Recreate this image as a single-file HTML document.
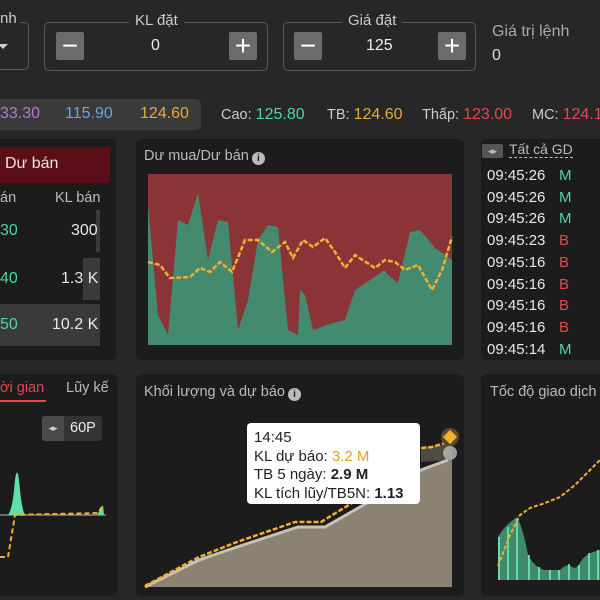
<!DOCTYPE html>
<html><head><meta charset="utf-8"><style>
*{margin:0;padding:0;box-sizing:border-box}
body{width:600px;height:600px;background:#272727;font-family:"Liberation Sans","Noto Sans CJK SC",sans-serif;color:#ddd;position:relative;overflow:hidden}
.a{position:absolute;white-space:nowrap}
.box{position:absolute;border:1.5px solid #5a5a5a;border-radius:5px}
.btn{position:absolute;width:28px;height:28px;background:#6b6b6b;border-radius:2px;color:#fff;font-size:28px;line-height:27px;text-align:center}
.lbl{position:absolute;background:#272727;padding:0 6px;font-size:15px;color:#ccc;top:-11px}
.p{position:absolute;background:#1c1c1c;border-radius:5px}
.t{font-size:14.5px;color:#bbb}
.tr{font-size:15px;color:#e8e8e8}
.i{display:inline-block;width:13px;height:13px;border-radius:50%;background:#bbb;color:#1c1c1c;font-size:10px;text-align:center;line-height:13px;font-weight:bold;vertical-align:-1px;margin-left:3px}
</style></head><body>
<!-- top inputs -->
<div class="box" style="left:-10px;top:22px;width:39px;height:48px"></div>
<div class="a" style="left:0;top:10px;font-size:15px;color:#ccc;background:#272727;padding-right:3px">nh</div>
<div class="a" style="left:-2px;top:44px;width:0;height:0;border-left:5px solid transparent;border-right:5px solid transparent;border-top:5px solid #ccc"></div>
<div class="box" style="left:44px;top:22px;width:224px;height:49px"><div class="lbl" style="left:84px">KL đặt</div></div>
<div class="btn" style="left:56px;top:32px">−</div>
<div class="a" style="left:151px;top:37px;font-size:16px;color:#eee">0</div>
<div class="btn" style="left:229px;top:32px">+</div>
<div class="box" style="left:283px;top:22px;width:193px;height:49px"><div class="lbl" style="left:58px">Giá đặt</div></div>
<div class="btn" style="left:294px;top:32px">−</div>
<div class="a" style="left:366px;top:37px;font-size:16px;color:#eee">125</div>
<div class="btn" style="left:438px;top:32px">+</div>
<div class="a" style="left:492px;top:23px;font-size:16px;color:#aaa">Giá trị lệnh</div>
<div class="a" style="left:492px;top:47px;font-size:16px;color:#ddd">0</div>
<!-- price row -->
<div class="a" style="left:-6px;top:99px;width:207px;height:31px;background:#3a3a3a;border-radius:5px"></div>
<div class="a" style="left:0;top:105px;font-size:16px;color:#b775d8">33.30</div>
<div class="a" style="left:65px;top:105px;font-size:16px;color:#6fa3dc">115.90</div>
<div class="a" style="left:140px;top:105px;font-size:16px;color:#e6a93e">124.60</div>
<div class="a" style="left:221px;top:106px;font-size:14.5px;color:#ccc">Cao: <span style="color:#4ed6a0;font-size:16px">125.80</span></div>
<div class="a" style="left:327px;top:106px;font-size:14.5px;color:#ccc">TB: <span style="color:#e6a93e;font-size:16px">124.60</span></div>
<div class="a" style="left:422px;top:106px;font-size:14.5px;color:#ccc">Thấp: <span style="color:#e5474f;font-size:16px">123.00</span></div>
<div class="a" style="left:532px;top:106px;font-size:14.5px;color:#ccc">MC: <span style="color:#e5474f;font-size:16px">124.1</span></div>
<!-- row 2 -->
<div class="p" style="left:-6px;top:139px;width:122px;height:221px"></div>
<div class="a" style="left:-6px;top:147px;width:116px;height:36px;background:#5a0f18"></div>
<div class="a" style="left:5px;top:155px;font-size:16px;color:#f0e0e0">Dư bán</div>
<div class="a t" style="left:0;top:190px">án</div>
<div class="a t" style="left:55px;top:190px">KL bán</div>
<div class="a" style="left:96px;top:210px;width:4px;height:42px;background:#3a3a3a"></div>
<div class="a" style="left:83px;top:258px;width:17px;height:42px;background:#3a3a3a"></div>
<div class="a" style="left:-6px;top:304px;width:106px;height:42px;background:#3a3a3a"></div>
<div class="a" style="left:0;top:222px;font-size:16px;color:#4ed6a0">30</div>
<div class="a tr" style="left:71px;top:222px;font-size:16px">300</div>
<div class="a" style="left:0;top:270px;font-size:16px;color:#4ed6a0">40</div>
<div class="a tr" style="left:61px;top:270px;font-size:16px">1.3 K</div>
<div class="a" style="left:0;top:316px;font-size:16px;color:#4ed6a0">50</div>
<div class="a tr" style="left:52px;top:316px;font-size:16px">10.2 K</div>

<div class="p" style="left:136px;top:139px;width:328px;height:221px"></div>
<div class="a" style="left:144px;top:148px;font-size:14.5px;color:#bbb">Dư mua/Dư bán<span class="i">i</span></div>
<svg class="a" style="left:0;top:0" width="600" height="600">
<rect x="148" y="174" width="304" height="171" fill="#8a3438"/>
<polygon fill="#448a6e" points="148,205 158,315 168,335 178,220 188,225 198,193 208,260 218,220 228,222 238,330 248,300 258,240 268,225 278,227 288,330 298,335 300,290 305,295 313,330 326,325 345,320 355,290 385,270 388,275 398,283 410,232 420,230 435,248 452,260 452,345 148,345"/>
<polyline fill="none" stroke="#f0b030" stroke-width="2.5" stroke-dasharray="5,2" points="148,262 160,265 170,278 190,277 200,268 210,272 220,262 232,272 245,240 258,240 272,252 285,242 293,258 303,240 313,247 325,238 335,252 345,268 355,255 375,268 385,260 395,262 405,270 418,265 432,290 442,270 452,237"/>
</svg>
<div class="p" style="left:481px;top:139px;width:130px;height:221px"></div>
<div class="a" style="left:482px;top:144px;width:21px;height:14px;background:#555;border-radius:2px;font-size:9px;color:#bbb;text-align:center;line-height:14px">◂▸</div>
<div class="a" style="left:509px;top:141px;font-size:14px;color:#bbb;border-bottom:1px dashed #bbb;line-height:16px">Tất cả GD</div>
<div class="a" style="left:487px;top:165px;font-size:15px;line-height:21.7px;color:#e8e8e8">09:45:26<br>09:45:26<br>09:45:26<br>09:45:23<br>09:45:16<br>09:45:16<br>09:45:16<br>09:45:16<br>09:45:14</div>
<div class="a" style="left:559px;top:165px;font-size:15px;line-height:21.7px"><span style="color:#4ed6a0">M</span><br><span style="color:#4ed6a0">M</span><br><span style="color:#4ed6a0">M</span><br><span style="color:#e5474f">B</span><br><span style="color:#e5474f">B</span><br><span style="color:#e5474f">B</span><br><span style="color:#e5474f">B</span><br><span style="color:#e5474f">B</span><br><span style="color:#4ed6a0">M</span></div>
<!-- row 3 -->
<div class="p" style="left:-6px;top:374px;width:123px;height:222px"></div>
<div class="a" style="left:0;top:380px;font-size:14.5px;color:#e5474f">ời gian</div>
<div class="a" style="left:0;top:400px;width:46px;height:2px;background:#e5474f"></div>
<div class="a" style="left:66px;top:380px;font-size:14.5px;color:#bbb">Lũy kế</div>
<div class="a" style="left:42px;top:416px;width:60px;height:25px;background:#333;border-radius:3px"></div>
<div class="a" style="left:42px;top:416px;width:22px;height:25px;background:#4a4a4a;border-radius:3px 0 0 3px;font-size:9px;color:#ccc;text-align:center;line-height:25px">◂▸</div>
<div class="a" style="left:70px;top:420px;font-size:14.5px;color:#eee">60P</div>
<svg class="a" style="left:0;top:0" width="600" height="600">
<line x1="0" y1="515" x2="106" y2="515" stroke="#bbb" stroke-width="1"/>
<path d="M8 515 Q12 510 14 490 Q17 455 20 490 Q22 510 25 515Z" fill="#5fe0a8"/>
<path d="M97 515 L103 505 L104 515Z" fill="#5fe0a8"/>
<polyline fill="none" stroke="#f0b030" stroke-width="2" stroke-dasharray="5,3" points="0,557 8,557 15,515 98,513 103,505"/>
</svg>
<div class="p" style="left:136px;top:374px;width:328px;height:222px"></div>
<div class="a" style="left:144px;top:384px;font-size:14.5px;color:#bbb">Khối lượng và dự báo<span class="i">i</span></div>
<svg class="a" style="left:0;top:0" width="600" height="600">
<polygon fill="#8c8272" points="145,587 199,560 237,547 298,527 325,527 367,503 421,470 448,460 452,460 452,587"/>
<polygon fill="#4f4a43" points="421,447 452,444 452,460 421,462"/>
<polyline fill="none" stroke="#c9c1b4" stroke-width="3" points="145,587 199,560 237,547 298,527 325,527 367,503 421,470 448,460"/>
<polyline fill="none" stroke="#f0b030" stroke-width="2.5" stroke-dasharray="5,2" points="145,586 199,557 237,542 295,522 321,522 352,503 383,472 421,448 432,447 448,442"/>
<circle cx="450" cy="453" r="7" fill="#bbb" opacity=".8"/>
<circle cx="450" cy="437" r="9" fill="#5a4a2a"/>
<rect x="445" y="432" width="10" height="10" fill="#f0b030" transform="rotate(45 450 437)"/>
</svg>
<div class="a" style="left:247px;top:423px;width:173px;height:81px;background:#fff;border-radius:4px"></div>
<div class="a" style="left:254px;top:429px;font-size:15px;line-height:18.5px;color:#222">14:45<br>KL dự báo: <span style="color:#e6a020">3.2 M</span><br>TB 5 ngày: <b>2.9 M</b><br>KL tích lũy/TB5N: <b>1.13</b></div>
<div class="p" style="left:481px;top:374px;width:130px;height:222px"></div>
<div class="a" style="left:490px;top:384px;font-size:14.5px;color:#bbb">Tốc độ giao dịch</div>
<svg class="a" style="left:0;top:0" width="600" height="600">
<path d="M498 580 L498 537 Q505 525 517 517 Q523 528 528 555 Q535 568 545 570 L560 570 Q568 562 572 567 Q576 570 580 563 Q585 553 600 550 L600 580Z" fill="#3f8a6c"/>
<g stroke="#6ff0b8" stroke-width="1.6">
<line x1="499" y1="537" x2="499" y2="580"/><line x1="508" y1="527" x2="508" y2="580"/><line x1="517" y1="519" x2="517" y2="580"/><line x1="529" y1="555" x2="529" y2="580"/><line x1="539" y1="567" x2="539" y2="580"/><line x1="550" y1="570" x2="550" y2="580"/><line x1="559" y1="570" x2="559" y2="580"/><line x1="569" y1="564" x2="569" y2="580"/><line x1="579" y1="565" x2="579" y2="580"/><line x1="589" y1="553" x2="589" y2="580"/><line x1="598" y1="550" x2="598" y2="580"/>
</g>
<polyline fill="none" stroke="#f0b030" stroke-width="2" stroke-dasharray="4,2" points="498,566 510,535 520,515 530,508 545,503 560,497 575,485 590,470 600,460"/>
</svg>
</body></html>
